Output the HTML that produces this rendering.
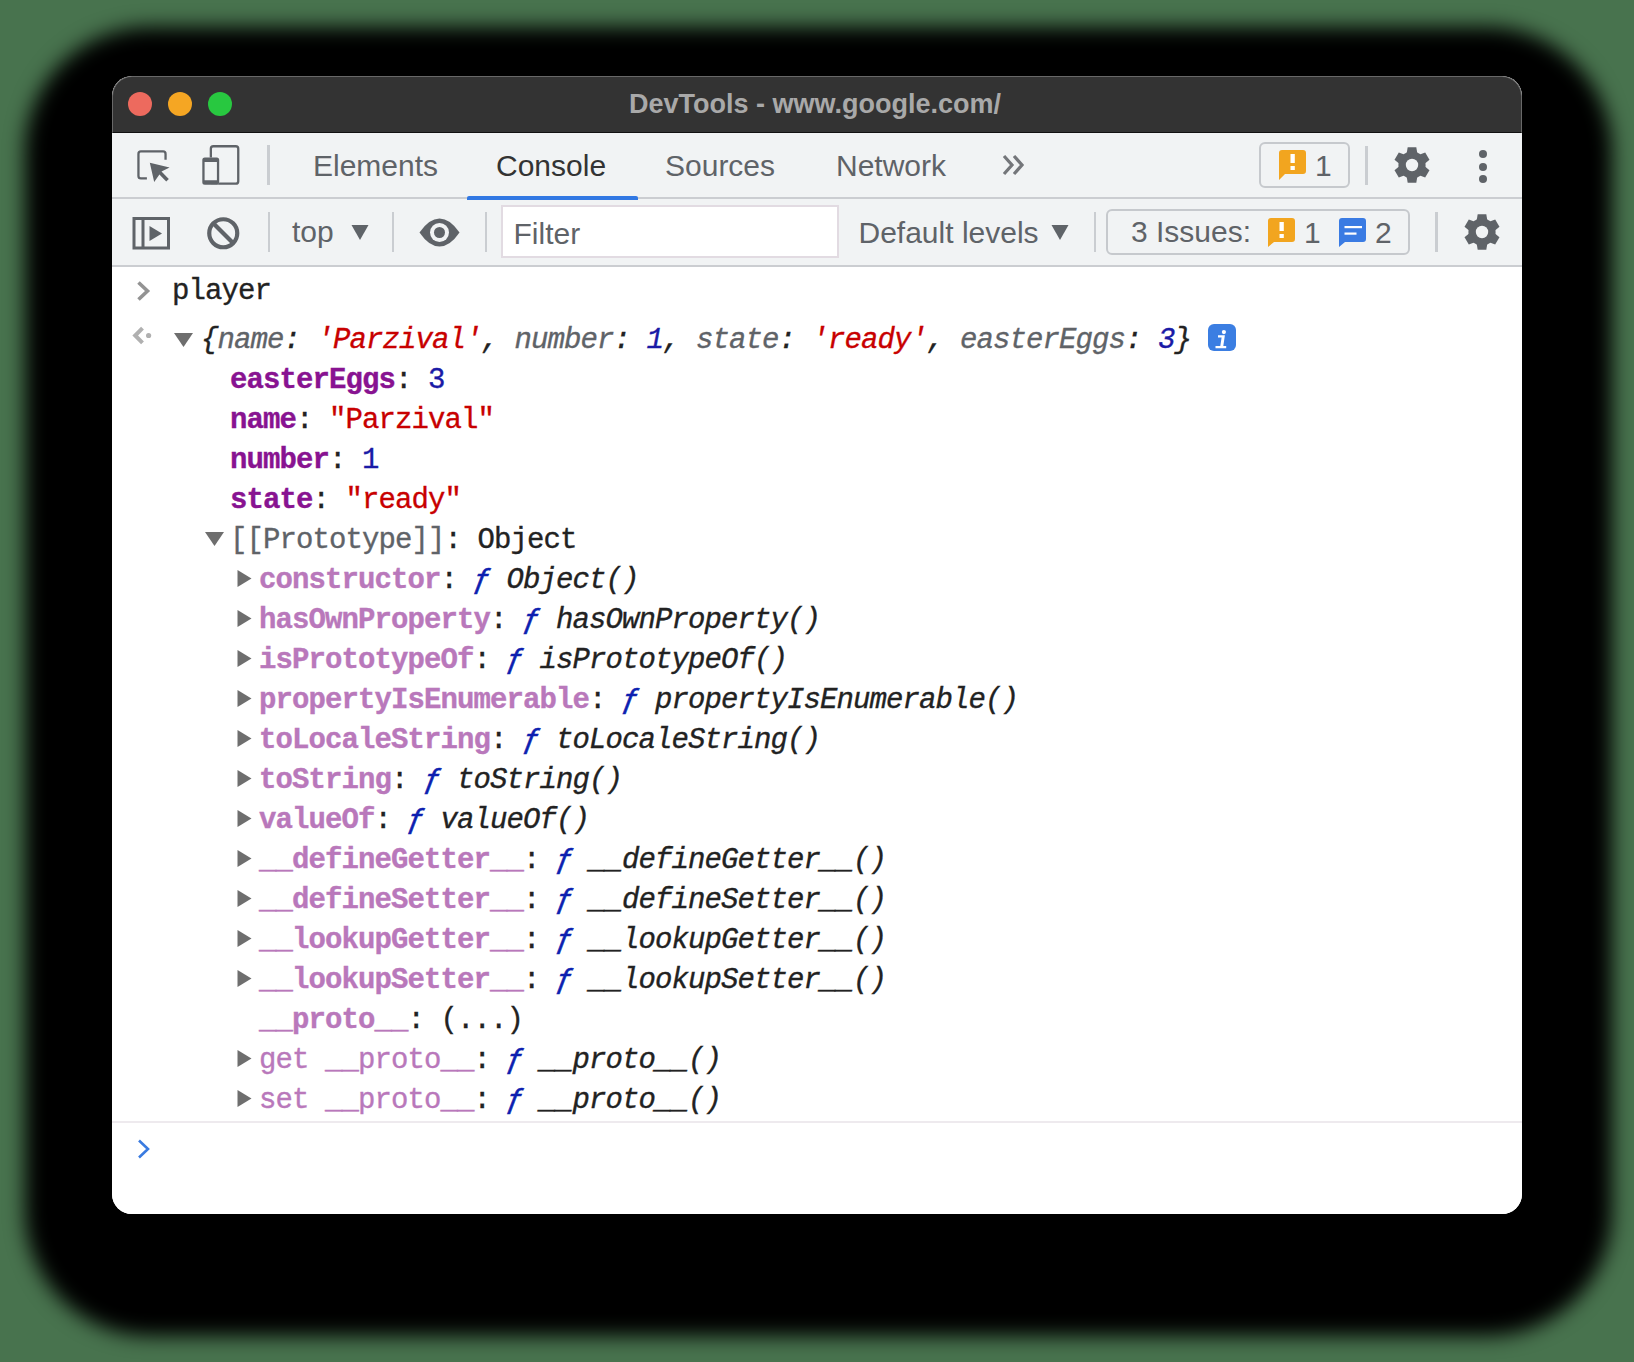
<!DOCTYPE html>
<html><head><meta charset="utf-8">
<style>
html,body{margin:0;padding:0;width:1634px;height:1362px;overflow:hidden;background:#48734e;}
*{box-sizing:border-box;}
.abs{position:absolute;}
#shadow{position:absolute;left:25px;top:27px;width:1587px;height:1309px;border-radius:125px;background:#000;filter:blur(10px);}
#win{position:absolute;left:112px;top:76px;width:1410px;height:1138px;border-radius:20px;overflow:hidden;background:#fff;}
#title{position:absolute;left:0;top:0;width:1410px;height:57px;background:#333333;border:1px solid #686868;border-bottom:1px solid #111;border-radius:20px 20px 0 0;}
.tl{position:absolute;top:15px;width:24px;height:24px;border-radius:50%;}
#ttext{position:absolute;left:-3px;width:1410px;top:10px;text-align:center;font:bold 27px/34px "Liberation Sans",sans-serif;color:#a9a9a9;}
#tb1{position:absolute;left:0;top:57px;width:1410px;height:66px;background:#f1f3f4;border-bottom:2px solid #cbcdd1;}
#tb2{position:absolute;left:0;top:123px;width:1410px;height:68px;background:#f1f3f4;border-bottom:2px solid #cbcdd1;}
.ui{position:absolute;font:30px/34px "Liberation Sans",sans-serif;color:#5f6368;white-space:pre;}
.sep{position:absolute;width:2.5px;background:#cacdd1;}
#con{position:absolute;left:0;top:191px;width:1410px;height:947px;background:#fff;font:27.5px/40px "Liberation Mono",monospace;color:#222;}
.row{position:absolute;white-space:pre;height:40px;}
.k{color:#881391;font-weight:bold;}
.kp{color:#b978bb;font-weight:bold;}
.kpn{color:#b978bb;}
.s{color:#c80000;}
.n{color:#1a1aa6;}
.g{color:#5f6368;}
.i{font-style:italic;}
.f{color:#0d1fb0;font-style:italic;-webkit-text-stroke:0.6px #0d1fb0;}
.tri-r{position:absolute;width:0;height:0;border-top:8.5px solid transparent;border-bottom:8.5px solid transparent;border-left:14px solid #6e6e6e;}
.tri-d{position:absolute;width:0;height:0;border-left:9.5px solid transparent;border-right:9.5px solid transparent;border-top:14px solid #6e6e6e;}
</style></head><body>
<div id="shadow"></div>
<div id="win">
  <div id="title">
    <div class="tl" style="left:15px;background:#ed6a5e;"></div>
    <div class="tl" style="left:55px;background:#f5a623;"></div>
    <div class="tl" style="left:95px;background:#28c840;"></div>
    <div id="ttext">DevTools - www.google.com/</div>
  </div>
  <div id="tb1"></div>
  <div id="tb2"></div>
  <div id="L" style="position:absolute;left:-112px;top:-76px;width:1634px;height:1362px;">
    <!-- toolbar 1 -->
    <svg class="abs" style="left:130px;top:140px" width="120" height="50" viewBox="0 0 120 50">
      <path d="M16.9 38.45 H10.9 Q8.45 38.45 8.45 36 V13.9 Q8.45 11.45 10.9 11.45 H33.1 Q35.55 11.45 35.55 13.9 V19.8" fill="none" stroke="#5f6368" stroke-width="2.3"/>
      <path d="M19.8 22.8 L39.6 27.5 L31.5 31.5 L24.2 41.9 Z" fill="#5f6368"/>
      <path d="M28.5 31 L37.5 40.2" stroke="#5f6368" stroke-width="3.6"/>
      <rect x="80.85" y="6.25" width="27.4" height="37.4" rx="2.5" fill="none" stroke="#5f6368" stroke-width="2.3"/>
      <rect x="72.3" y="17.6" width="16.9" height="27.2" rx="2.5" fill="#f1f3f4"/>
      <path fill-rule="evenodd" fill="#5f6368" d="M74.8 17.6 H86.7 Q89.2 17.6 89.2 20.1 V42.3 Q89.2 44.8 86.7 44.8 H74.8 Q72.3 44.8 72.3 42.3 V20.1 Q72.3 17.6 74.8 17.6 Z M74.6 22 V40.3 H86.9 V22 Z"/>
    </svg>
    <div class="sep" style="left:267px;top:145px;height:40px;"></div>
    <div class="ui" style="left:313px;top:149px;">Elements</div>
    <div class="ui" style="left:496px;top:149px;color:#333">Console</div>
    <div class="abs" style="left:467px;top:196px;width:171px;height:4px;background:#3178e3;border-radius:2px 2px 0 0"></div>
    <div class="ui" style="left:665px;top:149px;">Sources</div>
    <div class="ui" style="left:836px;top:149px;">Network</div>
    <svg class="abs" style="left:1000px;top:152px" width="28" height="26" viewBox="0 0 28 26">
      <path d="M4 4 L12 13 L4 22 M14 4 L22 13 L14 22" fill="none" stroke="#74767a" stroke-width="3.2"/>
    </svg>
    <div class="abs" style="left:1259px;top:142px;width:91px;height:46px;border:2px solid #c6c9cd;border-radius:6px;"></div>
    <svg class="abs" style="left:1278px;top:149px" width="30" height="32" viewBox="0 0 30 32">
      <path d="M4 1 H25 Q28 1 28 4 V22 Q28 25 25 25 H7 L1 31 V4 Q1 1 4 1 Z" fill="#f2a51f"/>
      <rect x="12.5" y="5" width="4.3" height="9" fill="#fff"/><rect x="12.5" y="17" width="4.3" height="4" fill="#fff"/>
    </svg>
    <div class="ui" style="left:1315px;top:149px;">1</div>
    <div class="sep" style="left:1365px;top:146px;height:39px;"></div>
    <svg class="abs" style="left:1391.9px;top:144.8px" width="40" height="40" viewBox="-20 -20 40 40"><g fill="#5f6368"><circle r="13.6"/><path d="M-4.3 -17.7 H4.3 L5.6 -10 H-5.6 Z"/><path d="M-4.3 -17.7 H4.3 L5.6 -10 H-5.6 Z" transform="rotate(60)"/><path d="M-4.3 -17.7 H4.3 L5.6 -10 H-5.6 Z" transform="rotate(120)"/><path d="M-4.3 -17.7 H4.3 L5.6 -10 H-5.6 Z" transform="rotate(180)"/><path d="M-4.3 -17.7 H4.3 L5.6 -10 H-5.6 Z" transform="rotate(240)"/><path d="M-4.3 -17.7 H4.3 L5.6 -10 H-5.6 Z" transform="rotate(300)"/></g><circle r="6.2" fill="#f1f3f4"/></svg>
    <div class="abs" style="left:1479px;top:150px;width:8px;height:8px;border-radius:50%;background:#5f6368"></div>
    <div class="abs" style="left:1479px;top:162.5px;width:8px;height:8px;border-radius:50%;background:#5f6368"></div>
    <div class="abs" style="left:1479px;top:175px;width:8px;height:8px;border-radius:50%;background:#5f6368"></div>

    <!-- toolbar 2 -->
    <svg class="abs" style="left:130px;top:215px" width="42" height="37" viewBox="0 0 42 37">
      <rect x="4" y="3.5" width="34.5" height="29.5" fill="none" stroke="#5f6368" stroke-width="3"/>
      <path d="M13 3.5 V33" stroke="#5f6368" stroke-width="3"/>
      <path d="M19.5 11 L32 18.5 L19.5 26 Z" fill="#5f6368"/>
    </svg>
    <svg class="abs" style="left:205px;top:215px" width="37" height="37" viewBox="0 0 37 37">
      <circle cx="18.25" cy="18.25" r="14" fill="none" stroke="#5f6368" stroke-width="4.2"/>
      <path d="M8.5 8.5 L28 28" stroke="#5f6368" stroke-width="4.2"/>
    </svg>
    <div class="sep" style="left:267.5px;top:212px;height:40px;"></div>
    <div class="ui" style="left:292px;top:215px;">top</div>
    <svg class="abs" style="left:350px;top:224px" width="20" height="17" viewBox="0 0 20 17"><path d="M1.5 1 H18.5 L10 16 Z" fill="#5f6368"/></svg>
    <div class="sep" style="left:391.5px;top:212px;height:40px;"></div>
    <svg class="abs" style="left:417px;top:216px" width="45" height="33" viewBox="0 0 45 33">
      <path d="M2.5 16.5 Q12 2.5 22.5 2.5 Q33 2.5 42.5 16.5 Q33 30.5 22.5 30.5 Q12 30.5 2.5 16.5 Z" fill="#5f6368"/>
      <circle cx="22.5" cy="16.5" r="9.5" fill="#f1f3f4"/><circle cx="22.5" cy="16.5" r="5.5" fill="#5f6368"/>
    </svg>
    <div class="sep" style="left:484.5px;top:212px;height:40px;"></div>
    <div class="abs" style="left:501px;top:205px;width:338px;height:53px;border:2px solid #e2dbe2;background:#fff;"></div>
    <div class="ui" style="left:513.5px;top:217px;color:#5f6368">Filter</div>
    <div class="ui" style="left:858.5px;top:216px;">Default levels</div>
    <svg class="abs" style="left:1050px;top:224px" width="20" height="17" viewBox="0 0 20 17"><path d="M1.5 1 H18.5 L10 16 Z" fill="#5f6368"/></svg>
    <div class="sep" style="left:1093.5px;top:212px;height:40px;"></div>
    <div class="abs" style="left:1106px;top:209px;width:304px;height:46px;border:2px solid #c6c9cd;border-radius:6px;"></div>
    <div class="ui" style="left:1131px;top:215px;">3 Issues:</div>
    <svg class="abs" style="left:1267px;top:217px" width="30" height="31" viewBox="0 0 30 31">
      <path d="M4 1 H25 Q28 1 28 4 V22 Q28 25 25 25 H7 L1 30 V4 Q1 1 4 1 Z" fill="#f2a51f"/>
      <rect x="12.5" y="5" width="4.3" height="9" fill="#fff"/><rect x="12.5" y="17" width="4.3" height="4" fill="#fff"/>
    </svg>
    <div class="ui" style="left:1304px;top:216px;">1</div>
    <svg class="abs" style="left:1338px;top:217px" width="30" height="31" viewBox="0 0 30 31">
      <path d="M4 1 H25 Q28 1 28 4 V22 Q28 25 25 25 H7 L1 30 V4 Q1 1 4 1 Z" fill="#3a7be3"/>
      <rect x="6.5" y="9" width="17.5" height="2.2" fill="#fff"/><rect x="6.5" y="15.5" width="12" height="2.2" fill="#fff"/>
    </svg>
    <div class="ui" style="left:1375px;top:216px;">2</div>
    <div class="sep" style="left:1435px;top:212px;height:40px;"></div>
    <svg class="abs" style="left:1461.9px;top:211.9px" width="40" height="40" viewBox="-20 -20 40 40"><g fill="#5f6368"><circle r="13.6"/><path d="M-4.3 -17.7 H4.3 L5.6 -10 H-5.6 Z"/><path d="M-4.3 -17.7 H4.3 L5.6 -10 H-5.6 Z" transform="rotate(60)"/><path d="M-4.3 -17.7 H4.3 L5.6 -10 H-5.6 Z" transform="rotate(120)"/><path d="M-4.3 -17.7 H4.3 L5.6 -10 H-5.6 Z" transform="rotate(180)"/><path d="M-4.3 -17.7 H4.3 L5.6 -10 H-5.6 Z" transform="rotate(240)"/><path d="M-4.3 -17.7 H4.3 L5.6 -10 H-5.6 Z" transform="rotate(300)"/></g><circle r="6.2" fill="#f1f3f4"/></svg>
  </div>
  <div id="con"></div>
  <div id="C" style="position:absolute;left:-112px;top:-76px;width:1634px;height:1362px;font:29px/40px 'Liberation Mono',monospace;letter-spacing:-0.903px;color:#222;-webkit-text-stroke-width:0.35px;">
    <svg class="abs" style="left:134px;top:279px" width="19" height="24" viewBox="0 0 19 24"><path d="M4.5 3.5 L13.5 12 L4.5 20.5" fill="none" stroke="#939393" stroke-width="3.6"/></svg>
    <svg class="abs" style="left:131px;top:325px" width="23" height="23" viewBox="0 0 23 23"><path d="M11.5 3.2 L4.2 10.5 L11.5 17.8" fill="none" stroke="#b0b0b0" stroke-width="4"/><circle cx="17.6" cy="10.5" r="2.6" fill="#b0b0b0"/></svg>
    <svg class="abs" style="left:173px;top:332px" width="21" height="16" viewBox="0 0 21 16"><path d="M1 1 H20 L10.5 15 Z" fill="#6e6e6e"/></svg>
    <div class="abs" style="left:1208px;top:324px;width:28px;height:27px;border-radius:6px;background:#3b7ee2;"></div>
    <svg class="abs" style="left:1208px;top:324px" width="28" height="27" viewBox="0 0 28 27"><circle cx="15.9" cy="8.1" r="2.1" fill="#fff"/><path d="M10 11.2 H16.9 L15.3 22 H18.2 V24.2 H7.5 V22 H12.3 L13.6 13.4 H10 Z" fill="#fff"/></svg>
    <svg class="abs" style="left:204px;top:531px" width="21" height="16" viewBox="0 0 21 16"><path d="M1 1 H20 L10.5 15 Z" fill="#6e6e6e"/></svg>
    <div class="row" style="left:172px;top:272px">player</div>
    <div class="row" style="left:201px;top:321px"><span class="i"><span>{</span><span class="g">name</span>: <span class="s">'Parzival'</span>, <span class="g">number</span>: <span class="n">1</span>, <span class="g">state</span>: <span class="s">'ready'</span>, <span class="g">easterEggs</span>: <span class="n">3</span>}</span></div>
    <div class="row" style="left:230px;top:361px"><span class="k">easterEggs</span>: <span class="n">3</span></div>
    <div class="row" style="left:230px;top:401px"><span class="k">name</span>: <span class="s">"Parzival"</span></div>
    <div class="row" style="left:230px;top:441px"><span class="k">number</span>: <span class="n">1</span></div>
    <div class="row" style="left:230px;top:481px"><span class="k">state</span>: <span class="s">"ready"</span></div>
    <div class="row" style="left:230px;top:521px"><span class="g">[[Prototype]]</span>: Object</div>
    <div class="row" style="left:259px;top:561px"><span class="kp">constructor</span>: <span class="f">ƒ</span> <span class="i">Object()</span></div>
    <div class="row" style="left:259px;top:601px"><span class="kp">hasOwnProperty</span>: <span class="f">ƒ</span> <span class="i">hasOwnProperty()</span></div>
    <div class="row" style="left:259px;top:641px"><span class="kp">isPrototypeOf</span>: <span class="f">ƒ</span> <span class="i">isPrototypeOf()</span></div>
    <div class="row" style="left:259px;top:681px"><span class="kp">propertyIsEnumerable</span>: <span class="f">ƒ</span> <span class="i">propertyIsEnumerable()</span></div>
    <div class="row" style="left:259px;top:721px"><span class="kp">toLocaleString</span>: <span class="f">ƒ</span> <span class="i">toLocaleString()</span></div>
    <div class="row" style="left:259px;top:761px"><span class="kp">toString</span>: <span class="f">ƒ</span> <span class="i">toString()</span></div>
    <div class="row" style="left:259px;top:801px"><span class="kp">valueOf</span>: <span class="f">ƒ</span> <span class="i">valueOf()</span></div>
    <div class="row" style="left:259px;top:841px"><span class="kp">__defineGetter__</span>: <span class="f">ƒ</span> <span class="i">__defineGetter__()</span></div>
    <div class="row" style="left:259px;top:881px"><span class="kp">__defineSetter__</span>: <span class="f">ƒ</span> <span class="i">__defineSetter__()</span></div>
    <div class="row" style="left:259px;top:921px"><span class="kp">__lookupGetter__</span>: <span class="f">ƒ</span> <span class="i">__lookupGetter__()</span></div>
    <div class="row" style="left:259px;top:961px"><span class="kp">__lookupSetter__</span>: <span class="f">ƒ</span> <span class="i">__lookupSetter__()</span></div>
    <div class="row" style="left:259px;top:1001px"><span class="kp">__proto__</span>: (...)</div>
    <div class="row" style="left:259px;top:1041px"><span class="kpn">get __proto__</span>: <span class="f">ƒ</span> <span class="i">__proto__()</span></div>
    <div class="row" style="left:259px;top:1081px"><span class="kpn">set __proto__</span>: <span class="f">ƒ</span> <span class="i">__proto__()</span></div>
    <svg class="abs" style="left:236px;top:569px" width="17" height="19" viewBox="0 0 17 19"><path d="M1.5 1 L15.5 9.5 L1.5 18 Z" fill="#6e6e6e"/></svg>
    <svg class="abs" style="left:236px;top:609px" width="17" height="19" viewBox="0 0 17 19"><path d="M1.5 1 L15.5 9.5 L1.5 18 Z" fill="#6e6e6e"/></svg>
    <svg class="abs" style="left:236px;top:649px" width="17" height="19" viewBox="0 0 17 19"><path d="M1.5 1 L15.5 9.5 L1.5 18 Z" fill="#6e6e6e"/></svg>
    <svg class="abs" style="left:236px;top:689px" width="17" height="19" viewBox="0 0 17 19"><path d="M1.5 1 L15.5 9.5 L1.5 18 Z" fill="#6e6e6e"/></svg>
    <svg class="abs" style="left:236px;top:729px" width="17" height="19" viewBox="0 0 17 19"><path d="M1.5 1 L15.5 9.5 L1.5 18 Z" fill="#6e6e6e"/></svg>
    <svg class="abs" style="left:236px;top:769px" width="17" height="19" viewBox="0 0 17 19"><path d="M1.5 1 L15.5 9.5 L1.5 18 Z" fill="#6e6e6e"/></svg>
    <svg class="abs" style="left:236px;top:809px" width="17" height="19" viewBox="0 0 17 19"><path d="M1.5 1 L15.5 9.5 L1.5 18 Z" fill="#6e6e6e"/></svg>
    <svg class="abs" style="left:236px;top:849px" width="17" height="19" viewBox="0 0 17 19"><path d="M1.5 1 L15.5 9.5 L1.5 18 Z" fill="#6e6e6e"/></svg>
    <svg class="abs" style="left:236px;top:889px" width="17" height="19" viewBox="0 0 17 19"><path d="M1.5 1 L15.5 9.5 L1.5 18 Z" fill="#6e6e6e"/></svg>
    <svg class="abs" style="left:236px;top:929px" width="17" height="19" viewBox="0 0 17 19"><path d="M1.5 1 L15.5 9.5 L1.5 18 Z" fill="#6e6e6e"/></svg>
    <svg class="abs" style="left:236px;top:969px" width="17" height="19" viewBox="0 0 17 19"><path d="M1.5 1 L15.5 9.5 L1.5 18 Z" fill="#6e6e6e"/></svg>
    <svg class="abs" style="left:236px;top:1049px" width="17" height="19" viewBox="0 0 17 19"><path d="M1.5 1 L15.5 9.5 L1.5 18 Z" fill="#6e6e6e"/></svg>
    <svg class="abs" style="left:236px;top:1089px" width="17" height="19" viewBox="0 0 17 19"><path d="M1.5 1 L15.5 9.5 L1.5 18 Z" fill="#6e6e6e"/></svg>
    <div class="abs" style="left:112px;top:1121px;width:1410px;height:1.5px;background:#eeeaee"></div>
    <svg class="abs" style="left:135px;top:1137px" width="18" height="24" viewBox="0 0 18 24"><path d="M4 3.5 L13 12 L4 20.5" fill="none" stroke="#3a7be0" stroke-width="2.6"/></svg>
  </div>
</div>
</body></html>
